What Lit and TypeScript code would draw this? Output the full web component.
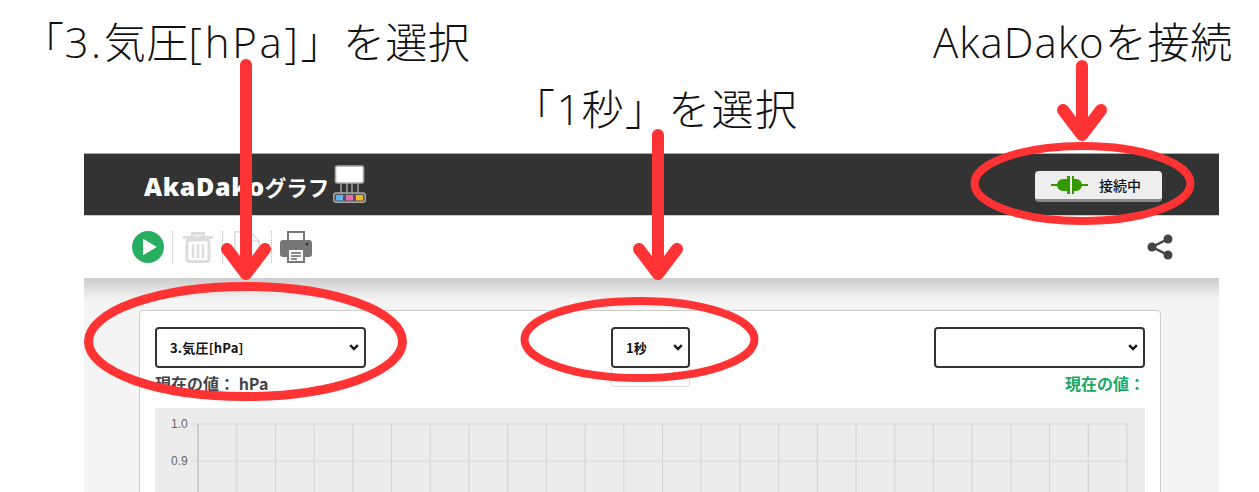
import { LitElement, html, css, svg } from "lit";
import { customElement } from "lit/decorators.js";

const RED = "#ff3333";

@customElement("app-root")
export class AppRoot extends LitElement {
  static styles = css`
    :host { display: block; position: relative; width: 1259px; height: 492px; overflow: hidden; background: #fff; font-family: "Noto Sans CJK JP", "Noto Sans", sans-serif; }
    .shot { margin: 153px 0 0 84px; width: 1135px; }
    .head { height: 63px; box-sizing: border-box; background: #333; border-top: 1px solid #aaa; border-bottom: 1px solid #ccc; display: flex; align-items: center; justify-content: space-between; padding: 3px 57px 0 60px; }
    .brand { display: flex; align-items: center; color: #fff; font-weight: 700; }
    .aka { font-family: "Open Sans", sans-serif; font-size: 25px; font-weight: 800; letter-spacing: 0.6px; margin-right: 0; }
    .graph { font-size: 21.500px; font-weight: 700; margin-right: 3px; }
    .logo { margin-bottom: 4px; margin-left: 1px; }
    .connect { width: 127px; height: 31px; box-sizing: border-box; background: #eee; border-radius: 4px; border-bottom: 3px solid #888; display: flex; align-items: center; color: #111; font-size: 14px; font-weight: 500; padding-left: 16px; gap: 11px; }
    .tools { height: 62px; display: flex; align-items: center; justify-content: space-between; padding: 0 45px 0 48px; }
    .left { display: flex; align-items: center; }
    .sep { width: 0; height: 32px; border-left: 1px dotted #bbb; margin: 0 10px 0 9px; }
    .sep.first { margin-left: 8px; }
    .sep.last { margin-right: 8px; margin-left: 10px; }
    .body { background: #f4f4f4; padding: 32px 58px 0 55px; height: 214px; box-sizing: border-box; background-image: linear-gradient(#ccc, #f4f4f4 22px); }
    .card { background: #fff; border: 1px solid #ccc; border-radius: 4px; padding: 16px 15px 0; height: 300px; box-sizing: border-box; }
    .controls { display: grid; grid-template-columns: 1fr 1fr 1fr; height: 81px; }
    .pick { position: relative; height: 41px; }
    .pick svg { position: absolute; right: 7px; top: 17px; pointer-events: none; }
    select { appearance: none; display: block; width: 100%; height: 41px; box-sizing: border-box; border: 2px solid #333; border-radius: 4px; background: #fff; color: #111; font: 700 13px "Noto Sans CJK JP", "Noto Sans", sans-serif; letter-spacing: 0.2px; padding: 0 0 0 13px; }
    .wide { width: 211px; }
    .short { width: 79px; }
    .mid { justify-self: center; margin-left: 1px; }
    .stub { width: 79px; height: 19px; box-sizing: border-box; border: 1px solid #ddd; border-top: 0; border-radius: 0 0 4px 4px; }
    .end { justify-self: end; display: flex; flex-direction: column; align-items: flex-end; }
    .value { font-size: 16px; font-weight: 700; line-height: 20px; margin-top: 5px; color: #444; }
    .value.green { color: #19a866; }
    .chart { background: #ececec; width: 990px; height: 100px; }
    .chart svg { display: block; }
    .chart text { font: 12px "Liberation Sans", sans-serif; fill: #666; }
    .note { position: absolute; font-size: 42px; line-height: 56px; font-weight: 300; color: #111; white-space: nowrap; letter-spacing: 0.4px; }
    .lat { font-family: "Open Sans", sans-serif; font-size: 42px; font-weight: 300; letter-spacing: 1px; }
    .n1 .lat { letter-spacing: 2.7px; }
    .n1 { left: 22px; top: 12px; }
    .n2 { left: 513px; top: 79px; letter-spacing: 1.4px; }
    .n3 { left: 933px; top: 12px; letter-spacing: 0.8px; }
    .overlay { position: absolute; left: 0; top: 0; }
  `;

  private chart() {
    const xs = Array.from({ length: 25 }, (_, i) => 43 + (i * 929) / 24);
    const ys = [16, 53, 90];
    return html`<svg width="990" height="100" viewBox="0 0 990 100">
      ${xs.map((x, i) => svg`<line x1=${x} x2=${x} y1="16" y2="100" stroke=${i === 0 ? "#aaa" : "#d2d2d2"} />`)}
      ${ys.map((y) => svg`<line x1="36" x2="972" y1=${y} y2=${y} stroke="#d6d6d6" />`)}
      <text x="16" y="20">1.0</text>
      <text x="16" y="57">0.9</text>
    </svg>`;
  }

  private chevron() {
    return html`<svg width="10" height="7" viewBox="0 0 10 7"><path d="M1.200 1.200L5 5l3.800-3.800" fill="none" stroke="#111" stroke-width="2.400"/></svg>`;
  }

  render() {
    return html`
      <div class="shot">
        <div class="head">
          <div class="brand">
            <span class="aka">AkaDako</span><span class="graph">グラフ</span>
            <svg class="logo" width="33" height="38" viewBox="0 0 33 38">
              <path d="M8 18v11M14 18v11M19 18v11M25 18v11" stroke="#bbb" stroke-width="1.200" fill="none"/>
              <rect x="2.500" y="1" width="28" height="17" rx="2" fill="#fff" stroke="#aaa" stroke-width="1.600"/>
              <rect x="0.700" y="28" width="31.600" height="9.300" rx="2.500" fill="#555" stroke="#aaa" stroke-width="1.400"/>
              <rect x="3" y="30" width="7" height="5.500" fill="#5bb4ee"/>
              <rect x="13" y="30" width="7" height="5.500" fill="#e070b0"/>
              <rect x="23" y="30" width="7" height="5.500" fill="#eeb830"/>
            </svg>
          </div>
          <div class="connect">
            <svg width="37" height="18" viewBox="0 0 37 18">
              <path d="M0 9h7M30 9h7" stroke="#339900" stroke-width="2"/>
              <path d="M16 3H12a6 6 0 0 0 0 12h4z M16 0h3v18h-3z M21 0h2v18h-2z M23 3h2a6 6 0 0 1 0 12h-2z" fill="#339900"/>
            </svg>
            <span>接続中</span>
          </div>
        </div>
        <div class="tools">
          <div class="left">
            <svg width="32" height="32" viewBox="0 0 32 32">
              <circle cx="16" cy="16" r="16" fill="#27ae60"/>
              <path d="M11.500 8.500L24 16l-12.500 7.500z" fill="#fff" stroke="#fff" stroke-linejoin="round"/>
            </svg>
            <span class="sep first"></span>
            <svg width="30" height="32" viewBox="0 0 30 32">
              <path d="M0 6.500h30" stroke="#ddd" stroke-width="3"/>
              <path d="M9.500 5V2.500h11V5" stroke="#ddd" stroke-width="3" fill="none"/>
              <rect x="4" y="9" width="22" height="21.500" rx="2.500" fill="none" stroke="#ddd" stroke-width="3"/>
              <path d="M10 13v14M15 13v14M20 13v14" stroke="#ddd" stroke-width="2.500"/>
            </svg>
            <span class="sep"></span>
            <svg width="28" height="32" viewBox="0 0 28 32">
              <path d="M2 1h15l9 9v21H2z" fill="none" stroke="#e2e2e2" stroke-width="2"/>
              <path d="M17 1v9h9" fill="none" stroke="#e2e2e2" stroke-width="2"/>
            </svg>
            <span class="sep last"></span>
            <svg width="32" height="32" viewBox="0 0 32 32">
              <path d="M8 10V1h16v9" fill="#fff" stroke="#777" stroke-width="2"/>
              <path d="M3 9h26a3 3 0 0 1 3 3v11a3 3 0 0 1-3 3h-4v-7H7v7H3a3 3 0 0 1-3-3V12a3 3 0 0 1 3-3z" fill="#777"/>
              <rect x="8" y="18" width="16" height="13" fill="#fff" stroke="#777" stroke-width="2"/>
              <path d="M11 22h10M11 25h10M11 28h6" stroke="#666" stroke-width="1.500"/>
              <circle cx="27" cy="13" r="1.500" fill="#333"/>
            </svg>
          </div>
          <svg width="28" height="28" viewBox="0 0 28 28">
            <path d="M22 6L6 14l16 8" fill="none" stroke="#444" stroke-width="2.500"/>
            <circle cx="22" cy="6" r="4.500" fill="#444"/>
            <circle cx="6" cy="14" r="4.500" fill="#444"/>
            <circle cx="22" cy="22" r="4.500" fill="#444"/>
          </svg>
        </div>
        <div class="body">
          <div class="card">
            <div class="controls">
              <div>
                <div class="pick wide"><select><option>3.気圧[hPa]</option></select>${this.chevron()}</div>
                <div class="value">現在の値： hPa</div>
              </div>
              <div class="mid">
                <div class="pick short"><select><option>1秒</option></select>${this.chevron()}</div>
                <div class="stub"></div>
              </div>
              <div class="end">
                <div class="pick wide"><select><option></option></select>${this.chevron()}</div>
                <div class="value green">現在の値：</div>
              </div>
            </div>
            <div class="chart">${this.chart()}</div>
          </div>
        </div>
      </div>

      <svg class="overlay" width="1259" height="492" viewBox="0 0 1259 492" fill="none" stroke=${RED}>
        <ellipse cx="245.500" cy="341.500" rx="157" ry="55" stroke-width="9"/>
        <ellipse cx="639.500" cy="339.500" rx="115" ry="38.500" stroke-width="8"/>
        <ellipse cx="1082.500" cy="183.500" rx="108" ry="37.500" stroke-width="8"/>
        <path d="M246 65V274M227 249l19 25l19-25" stroke-width="12" stroke-linecap="round" stroke-linejoin="round"/>
        <path d="M658 135V274M639 249l19 25l19-25" stroke-width="12" stroke-linecap="round" stroke-linejoin="round"/>
        <path d="M1082 66V135M1063 110l19 25l19-25" stroke-width="12" stroke-linecap="round" stroke-linejoin="round"/>
      </svg>
      <div class="note n1">「<span class="lat">3.</span>気圧<span class="lat">[hPa]</span>」を選択</div>
      <div class="note n2">「<span class="lat">1</span>秒」を選択</div>
      <div class="note n3"><span class="lat">AkaDako</span>を接続</div>
    `;
  }
}
